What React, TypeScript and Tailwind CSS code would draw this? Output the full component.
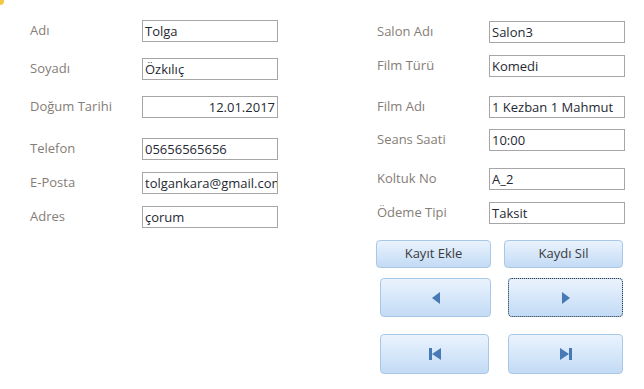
import React from "react";

const font = { fontFamily: '"Open Sans", "Noto Sans", sans-serif' };

function Field({ label, value, cls, right }: { label: string; value: string; cls: string; right?: boolean }) {
  return (
    <div className={"flex items-center h-[22px] " + cls}>
      <div className="w-[112px] text-[13px] text-[#857d77] leading-none -mt-[2px]">{label}</div>
      <div
        className={
          "w-[136px] h-[22px] border border-[#a6a6a6] bg-white px-[2px] text-[13px] text-[#1f2933] leading-[20px] overflow-hidden whitespace-nowrap " +
          (right ? "text-right" : "")
        }
      >
        {value}
      </div>
    </div>
  );
}

const btn =
  "flex items-center justify-center rounded-[4px] border border-[#a9c8e8] bg-gradient-to-b from-[#eaf3fd] to-[#c3dbf5] text-[13px] text-[#3b3b3b]";

export default function App() {
  return (
    <div className="relative w-[644px] h-[389px] bg-white overflow-hidden" style={font}>
      <div className="absolute left-0 top-0 w-[4px] h-[5px] rounded-br-full bg-[#f5c842]" />
      <div className="flex">
        <div className="flex flex-col pl-[30px] pt-[20px] w-[347px]">
          <Field label="Adı" value="Tolga" cls="" />
          <Field label="Soyadı" value="Özkılıç" cls="mt-[16px]" />
          <Field label="Doğum Tarihi" value="12.01.2017" cls="mt-[16px]" right />
          <Field label="Telefon" value="05656565656" cls="mt-[20px]" />
          <Field label="E-Posta" value="tolgankara@gmail.com" cls="mt-[12px]" />
          <Field label="Adres" value="çorum" cls="mt-[12px]" />
        </div>
        <div className="flex flex-col pt-[21px]">
          <div className="pl-[30px]">
            <Field label="Salon Adı" value="Salon3" cls="" />
            <Field label="Film Türü" value="Komedi" cls="mt-[12px]" />
            <Field label="Film Adı" value="1 Kezban 1 Mahmut" cls="mt-[19px]" />
            <Field label="Seans Saati" value="10:00" cls="mt-[11px]" />
            <Field label="Koltuk No" value="A_2" cls="mt-[17px]" />
            <Field label="Ödeme Tipi" value="Taksit" cls="mt-[12px]" />
          </div>
          <div className="flex mt-[16px] pl-[29px]">
            <div className={btn + " w-[115px] h-[28px]"}>Kayıt Ekle</div>
            <div className={btn + " w-[119px] h-[28px] ml-[13px]"}>Kaydı Sil</div>
          </div>
          <div className="flex mt-[10px] pl-[33px]">
            <div className={btn + " w-[111px] h-[39px]"}>
              <svg width="8" height="12" viewBox="0 0 8 12">
                <polygon points="8,0 8,12 0,6" fill="#4679b5" />
              </svg>
            </div>
            <div className={btn + " w-[115px] h-[39px] ml-[17px] relative"}>
              <div className="absolute -inset-[1px] rounded-[4px] border border-dotted border-[#2b3a4a]" />
              <svg width="8" height="12" viewBox="0 0 8 12">
                <polygon points="0,0 0,12 8,6" fill="#4679b5" />
              </svg>
            </div>
          </div>
          <div className="flex mt-[17px] pl-[33px]">
            <div className={btn + " w-[109px] h-[40px]"}>
              <svg width="12" height="12" viewBox="0 0 12 12">
                <rect x="0" y="0" width="3" height="12" fill="#4679b5" />
                <polygon points="12,0 12,12 3,6" fill="#4679b5" />
              </svg>
            </div>
            <div className={btn + " w-[115px] h-[40px] ml-[19px]"}>
              <svg width="12" height="12" viewBox="0 0 12 12">
                <polygon points="0,0 0,12 9,6" fill="#4679b5" />
                <rect x="9" y="0" width="3" height="12" fill="#4679b5" />
              </svg>
            </div>
          </div>
        </div>
      </div>
    </div>
  );
}
